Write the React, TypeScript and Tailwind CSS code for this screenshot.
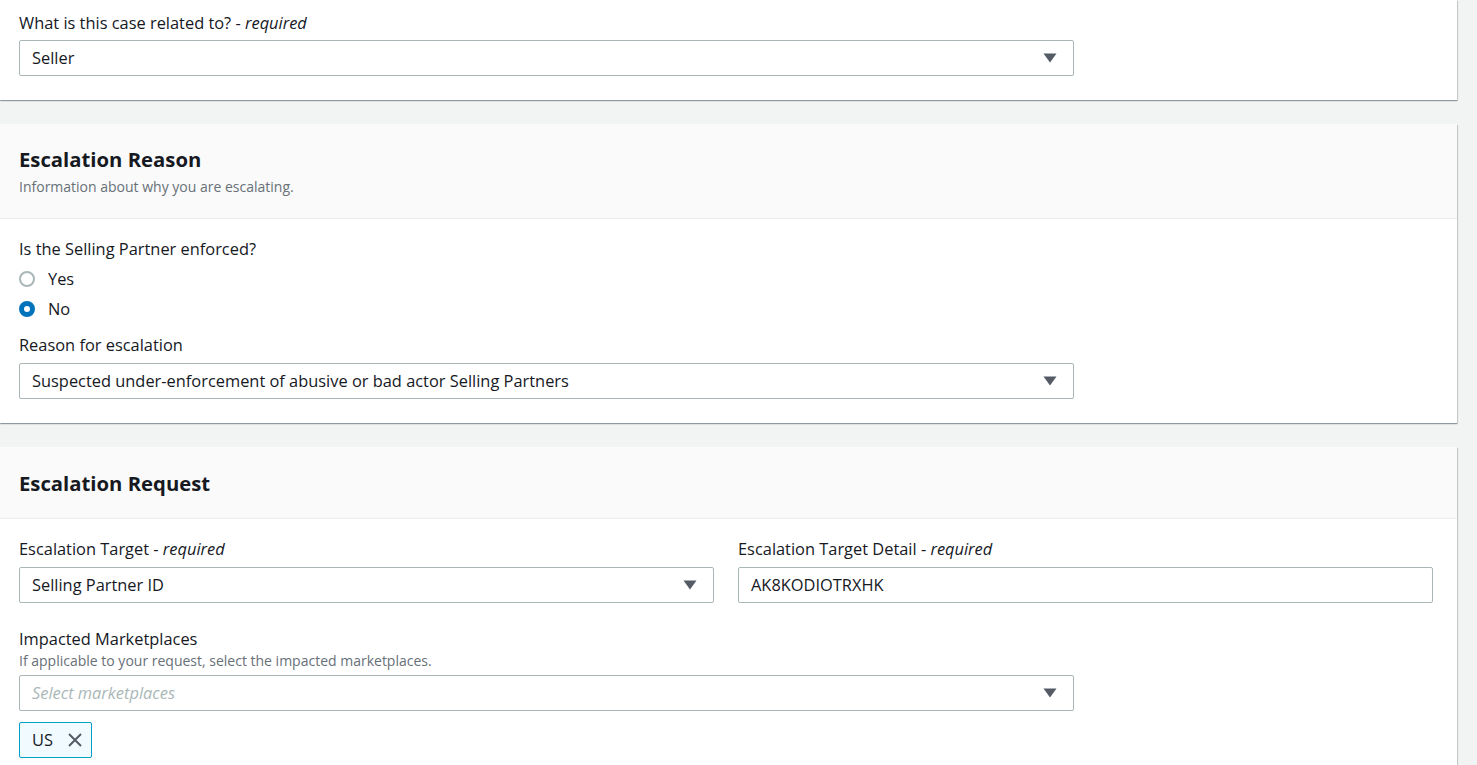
const font = { fontFamily: '"Open Sans", "Liberation Sans", sans-serif' }

function Caret() {
  return (
    <svg width="14" height="10" viewBox="0 0 14 10" className="shrink-0">
      <path d="M0.5 0.5 L13.5 0.5 L7 9.5 Z" fill="#545b64" />
    </svg>
  )
}

function Select({ value, placeholder, className = '' }: { value?: string; placeholder?: string; className?: string }) {
  return (
    <div
      className={`flex h-[36px] items-center justify-between rounded-[2px] border border-[#aab7b8] bg-white pl-[12px] pr-[16px] ${className}`}
    >
      {value ? (
        <span className="text-[16.4px] text-[#16191f]">{value}</span>
      ) : (
        <span className="text-[16.4px] italic text-[#aab7b8]">{placeholder}</span>
      )}
      <Caret />
    </div>
  )
}

function Label({ text, required }: { text: string; required?: boolean }) {
  return (
    <div className="text-[16.4px] leading-[22px] text-[#16191f]">
      {text}
      {required && (
        <>
          {' - '}
          <i>required</i>
        </>
      )}
    </div>
  )
}

function Radio({ label, checked }: { label: string; checked?: boolean }) {
  return (
    <div className="flex h-[22px] items-center">
      {checked ? (
        <span className="box-border h-[16px] w-[16px] rounded-full border-[5px] border-[#0073bb] bg-white" />
      ) : (
        <span className="box-border h-[16px] w-[16px] rounded-full border-2 border-[#aab7b8] bg-white" />
      )}
      <span className="ml-[13px] text-[16.4px] text-[#16191f]">{label}</span>
    </div>
  )
}

const card = 'w-[1457px] bg-white shadow-[0_1px_1px_0_rgba(0,28,36,0.3),1px_1px_1px_0_rgba(0,28,36,0.15)]'

export default function App() {
  return (
    <div className="h-[765px] overflow-hidden bg-[#f2f3f3]" style={font}>
      {/* top card, cut off */}
      <div className={`${card} pl-[19px] pr-[24px] pt-[12px] pb-[24px]`}>
        <Label text="What is this case related to?" required />
        <Select value="Seller" className="mt-[6px] w-[1055px]" />
      </div>

      {/* Escalation Reason */}
      <div className={`${card} mt-[24px]`}>
        <div className="border-b border-[#eaeded] bg-[#fafafa] pl-[19px] pr-[24px] pt-[21px] pb-[22px]">
          <h2 className="text-[20.3px] font-bold leading-[28px] text-[#16191f]">Escalation Reason</h2>
          <p className="mt-[5px] text-[14px] leading-[18px] text-[#687078]">Information about why you are escalating.</p>
        </div>
        <div className="pl-[19px] pr-[24px] pt-[19px] pb-[24px]">
          <Label text="Is the Selling Partner enforced?" />
          <div className="mt-[8px] flex flex-col gap-[8px]">
            <Radio label="Yes" />
            <Radio label="No" checked />
          </div>
          <div className="mt-[14px]">
            <Label text="Reason for escalation" />
          </div>
          <Select
            value="Suspected under-enforcement of abusive or bad actor Selling Partners"
            className="mt-[7px] w-[1055px]"
          />
        </div>
      </div>

      {/* Escalation Request */}
      <div className={`${card} mt-[24px]`}>
        <div className="border-b border-[#eaeded] bg-[#fafafa] pl-[19px] pr-[24px] pt-[22px] pb-[21px]">
          <h2 className="text-[20.3px] font-bold leading-[28px] text-[#16191f]">Escalation Request</h2>
        </div>
        <div className="pl-[19px] pr-[24px] pt-[19px] pb-[24px]">
          <div className="grid grid-cols-2 gap-x-[24px]">
            <div>
              <Label text="Escalation Target" required />
              <Select value="Selling Partner ID" className="mt-[7px]" />
            </div>
            <div>
              <Label text="Escalation Target Detail" required />
              <div className="mt-[7px] flex h-[36px] items-center rounded-[2px] border border-[#aab7b8] bg-white pl-[12px] text-[16.4px] text-[#16191f]">
                AK8KODIOTRXHK
              </div>
            </div>
          </div>
          <div className="mt-[25px]">
            <Label text="Impacted Marketplaces" />
            <p className="mt-[2px] text-[14px] leading-[18px] text-[#687078]">
              If applicable to your request, select the impacted marketplaces.
            </p>
          </div>
          <Select placeholder="Select marketplaces" className="mt-[5px] w-[1055px]" />
          <div className="mt-[11px] inline-flex h-[36px] items-center rounded-[2px] border border-[#00a1c9] bg-[#f1faff] pl-[12px] pr-[8px]">
            <span className="text-[16.4px] text-[#16191f]">US</span>
            <svg width="16" height="16" viewBox="0 0 16 16" className="ml-[14px]">
              <path d="M2 2 L14 14 M14 2 L2 14" stroke="#545b64" strokeWidth="2" fill="none" />
            </svg>
          </div>
        </div>
      </div>
    </div>
  )
}
